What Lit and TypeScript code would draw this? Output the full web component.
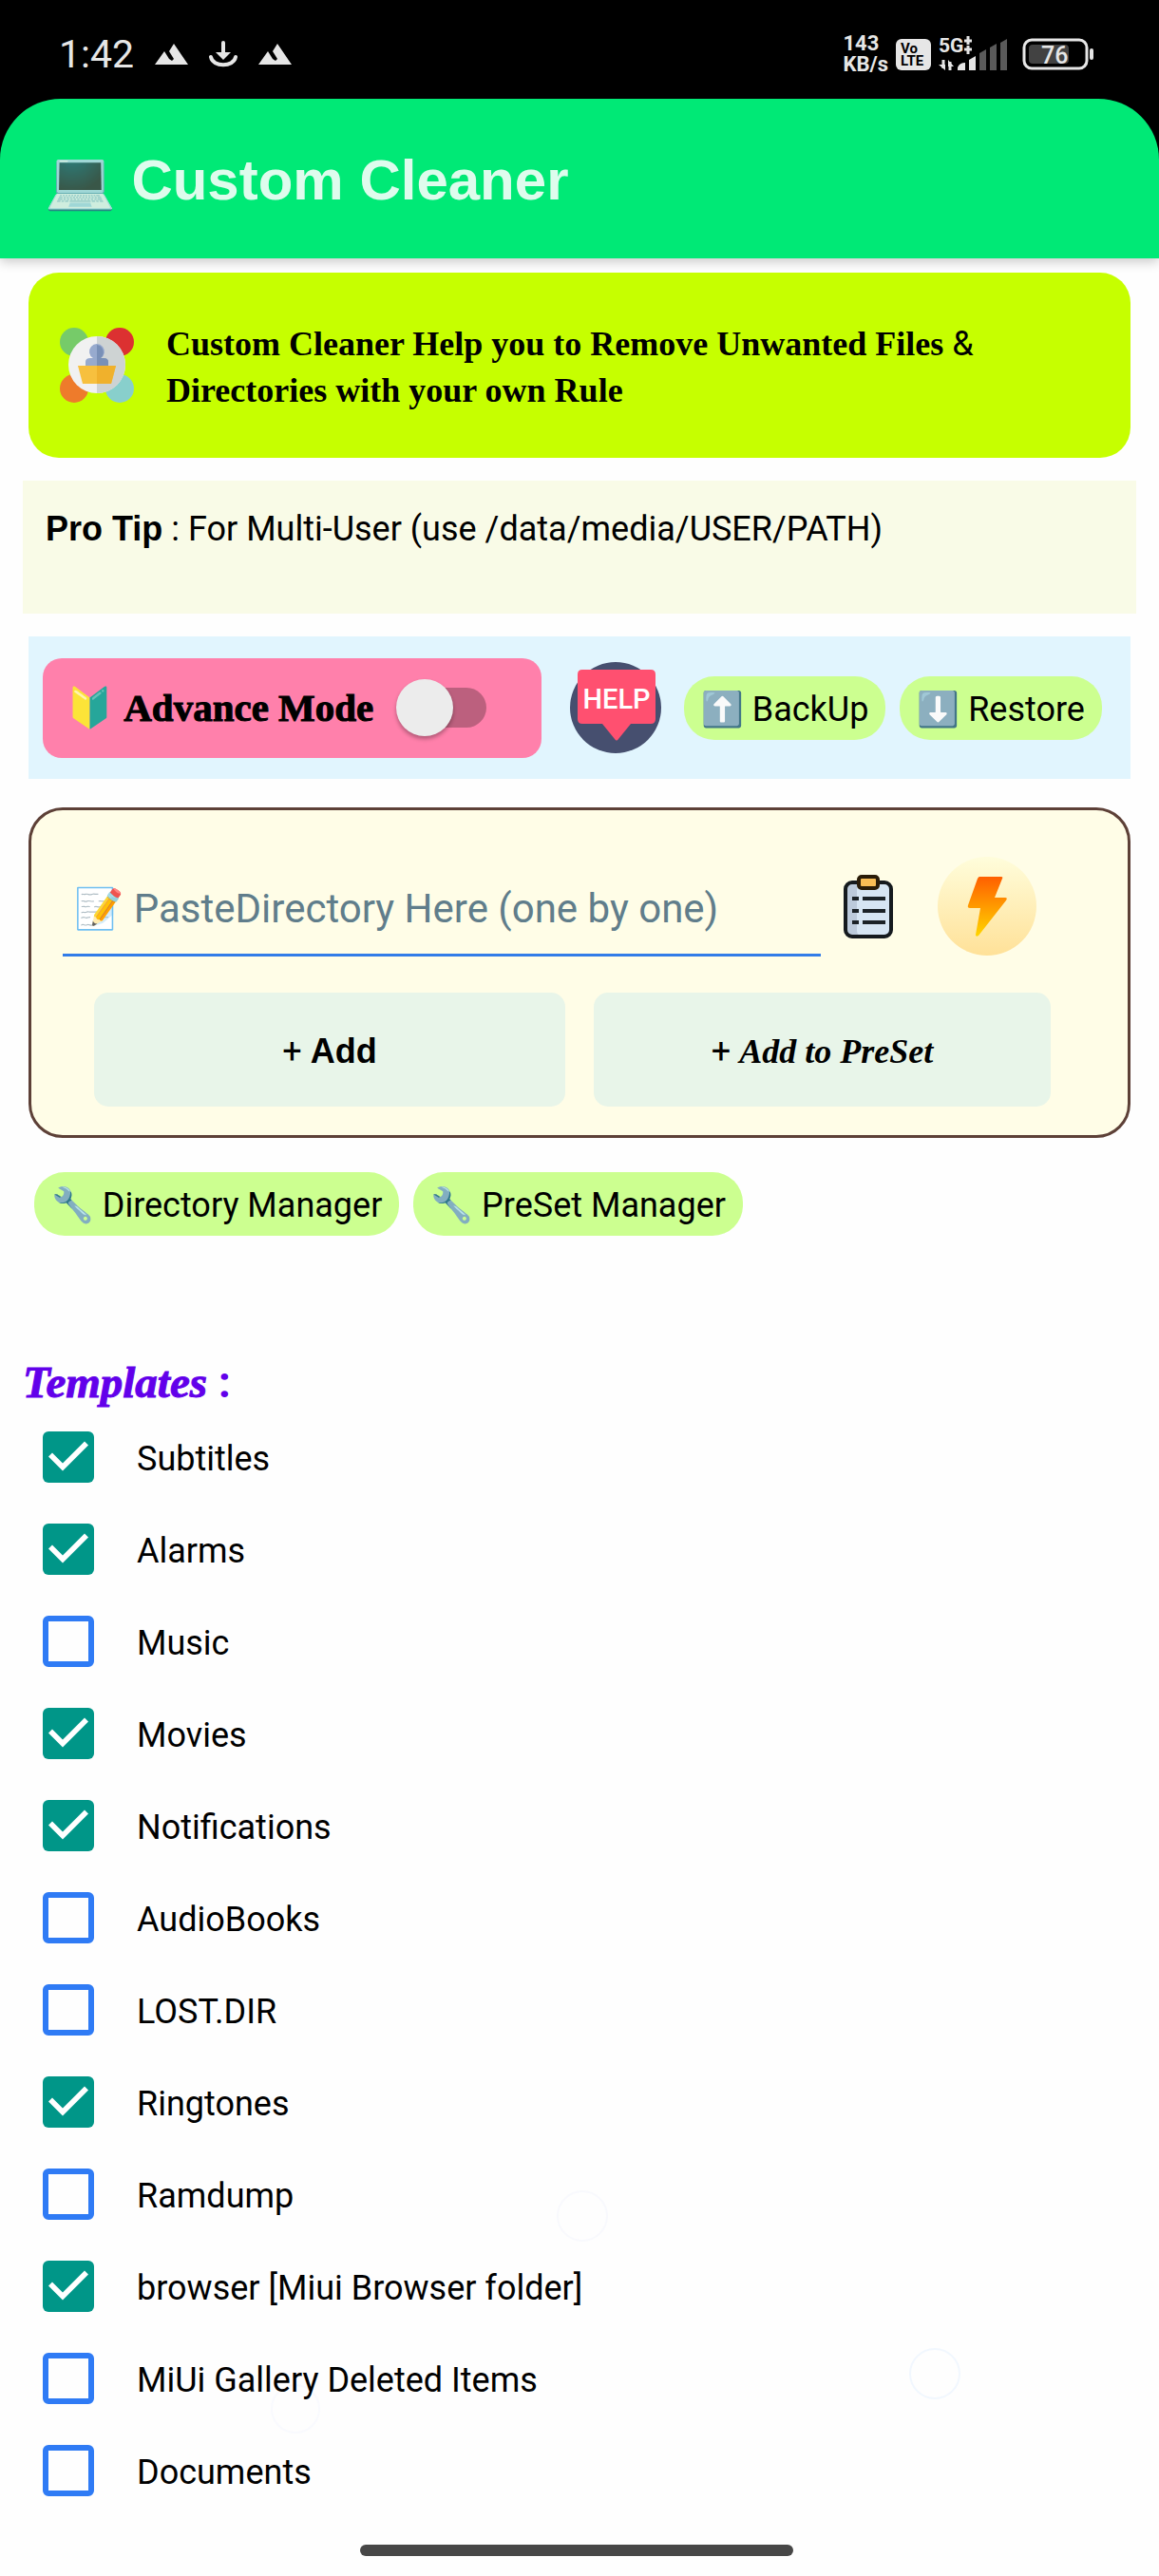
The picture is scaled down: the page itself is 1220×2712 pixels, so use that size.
import { LitElement, html, css, svg } from "lit";
import { customElement, property, state } from "lit/decorators.js";

interface Template {
  name: string;
  checked: boolean;
}

const mountain = html`<svg class="mountain" viewBox="0 0 35 22" aria-hidden="true">
  <path d="M0 22 10 8l5 8 3 2 2-2-5-8L20 0l15 22z" />
</svg>`;

@customElement("status-bar")
export class StatusBar extends LitElement {
  static styles = css`
    :host {
      display: flex;
      align-items: center;
      justify-content: space-between;
      height: 104px;
      padding: 10px 68px 0 62px;
      box-sizing: border-box;
      background: #000;
      color: #e6e6e6;
      font-family: Roboto, "Noto Sans", sans-serif;
    }
    .group {
      display: flex;
      align-items: center;
    }
    .left {
      gap: 22px;
    }
    .right {
      gap: 8px;
    }
    svg {
      display: block;
      fill: currentColor;
    }
    .time {
      font-size: 41px;
      line-height: 48px;
    }
    .mountain {
      width: 35px;
      height: 22px;
    }
    .download {
      width: 30px;
      height: 28px;
    }
    .speed {
      font-size: 22px;
      line-height: 22px;
      font-weight: 700;
    }
    .volte {
      width: 37px;
      height: 33px;
      border-radius: 6px;
      background: #e6e6e6;
      color: #000;
      font-size: 15px;
      line-height: 13px;
      padding: 4px 0 0 5px;
      box-sizing: border-box;
      font-weight: 700;
    }
    .signal {
      width: 73px;
      height: 48px;
      font-size: 21px;
      font-weight: 700;
    }
    .battery {
      width: 76px;
      height: 34px;
      font-size: 25px;
      font-weight: 500;
      margin-left: 7px;
    }
  `;

  render() {
    return html`
      <div class="group left">
        <span class="time">1:42</span>
        ${mountain}
        <svg class="download" viewBox="0 0 30 28" aria-hidden="true">
          <path d="M15 2v14M2 17c2 11 24 11 26 0" fill="none" stroke="currentColor" stroke-width="4" stroke-linecap="round" />
          <path d="M7 12h16l-8 8z" />
        </svg>
        ${mountain}
      </div>
      <div class="group right">
        <div class="speed">143<br />KB/s</div>
        <div class="volte">Vo<br />LTE</div>
        <svg class="signal" viewBox="0 -7 73 48" aria-label="5G signal">
          <text x="0" y="15">5G</text>
          <path d="M31 -2v9M27 3h8M31 8v9M27 12h8" stroke="currentColor" stroke-width="3" />
          <path d="M5 23v9M12 25v9" stroke="currentColor" stroke-width="3" />
          <path d="M0 28h7v6zM10 30v-7l6 7z" />
          <path d="M20 34v-3q2-5 8-5v8zM32 34V23l7-4v15z" />
          <path d="M43 34V16l7-4v22zM54 34V10l7-4v28zM65 34V5l7-4v33z" fill="#5a5a5a" />
        </svg>
        <svg class="battery" viewBox="0 0 76 34" aria-label="Battery">
          <rect x="2" y="2" width="66" height="30" rx="8" fill="none" stroke="currentColor" stroke-width="3" />
          <rect x="7" y="7" width="42" height="20" rx="4" fill="#424242" />
          <rect x="71" y="11" width="4" height="12" rx="2" />
          <text x="20" y="27">76</text>
        </svg>
      </div>
    `;
  }
}

@customElement("template-row")
export class TemplateRow extends LitElement {
  @property() name = "";
  @property({ type: Boolean }) checked = false;

  static styles = css`
    .row {
      display: flex;
      align-items: center;
      gap: 45px;
      height: 97px;
      padding-left: 45px;
      font-size: 36px;
      line-height: 42px;
    }
    .label {
      padding-top: 4px;
    }
    .box {
      appearance: none;
      flex: none;
      width: 54px;
      height: 54px;
      margin: 0;
      box-sizing: border-box;
      border: 6px solid #2f7bf5;
      border-radius: 6px;
    }
    .box:checked {
      border: 0;
      background: #009688;
    }
    .box:checked::before {
      content: "";
      display: block;
      width: 54px;
      height: 54px;
      background: #fff;
      clip-path: polygon(10px 23px, 6px 27px, 21px 42px, 48px 15px, 44px 11px, 21px 34px);
    }
  `;

  render() {
    return html`<label class="row">
      <input class="box" type="checkbox" .checked=${this.checked} />
      <span class="label">${this.name}</span>
    </label>`;
  }
}

@customElement("app-root")
export class AppRoot extends LitElement {
  @state() private templates: Template[] = [
    { name: "Subtitles", checked: true },
    { name: "Alarms", checked: true },
    { name: "Music", checked: false },
    { name: "Movies", checked: true },
    { name: "Notifications", checked: true },
    { name: "AudioBooks", checked: false },
    { name: "LOST.DIR", checked: false },
    { name: "Ringtones", checked: true },
    { name: "Ramdump", checked: false },
    { name: "browser [Miui Browser folder]", checked: true },
    { name: "MiUi Gallery Deleted Items", checked: false },
    { name: "Documents", checked: false },
  ];

  static styles = css`
    :host {
      display: block;
      position: relative;
      isolation: isolate;
      background: #fefefe;
      color: #000;
      font-family: Roboto, "Noto Sans", "Noto Color Emoji", sans-serif;
      font-size: 36px;
      line-height: 42px;
    }
    button {
      font: inherit;
      color: inherit;
      border: 0;
      margin: 0;
      padding: 0;
      background: none;
    }
    svg {
      display: block;
    }
    .top {
      background: #000;
    }
    .appbar {
      display: flex;
      align-items: center;
      height: 168px;
      padding: 0 47px;
      background: #00e976;
      border-radius: 64px 64px 0 0;
      box-shadow: 0 4px 12px rgba(0, 0, 0, 0.2);
    }
    .title {
      margin: 0;
      font: 700 60px/72px "Liberation Sans", Arial, "Noto Color Emoji", sans-serif;
      color: #fff;
      opacity: 0.87;
      padding-top: 3px;
    }
    .serif {
      font-family: "Liberation Serif", "Times New Roman", serif;
      font-weight: 700;
    }
    .sans {
      font-family: "Liberation Sans", Arial, sans-serif;
      font-weight: 700;
    }
    .intro {
      display: flex;
      align-items: center;
      gap: 34px;
      margin: 15px 30px 0;
      min-height: 195px;
      padding: 0 33px;
      box-sizing: border-box;
      background: #c6ff00;
      border-radius: 32px;
    }
    .logo {
      flex: none;
      width: 78px;
      height: 79px;
    }
    .introtext {
      margin: 0;
      padding-top: 4px;
      line-height: 49px;
      max-width: 900px;
    }
    .tip {
      margin: 24px 24px 0;
      min-height: 140px;
      padding: 30px 24px;
      box-sizing: border-box;
      background: #f9fbe7;
    }
    .tools {
      display: flex;
      align-items: center;
      gap: 15px;
      margin: 24px 30px 0;
      min-height: 150px;
      padding: 0 15px;
      box-sizing: border-box;
      background: #e1f5fe;
    }
    .mode {
      display: flex;
      align-items: center;
      justify-content: space-between;
      flex: 0 1 525px;
      height: 105px;
      padding: 0 58px 0 24px;
      box-sizing: border-box;
      border-radius: 20px;
      background: #ff80ab;
      font-size: 41px;
      line-height: 48px;
      white-space: nowrap;
    }
    .heavy {
      -webkit-text-stroke: 1px currentColor;
    }
    .switch {
      appearance: none;
      position: relative;
      flex: none;
      width: 95px;
      height: 60px;
      margin: 0;
    }
    .switch::before {
      content: "";
      position: absolute;
      inset: 9px 0 9px 12px;
      border-radius: 21px;
      background: #bc607e;
    }
    .switch::after {
      content: "";
      position: absolute;
      left: 0;
      top: 0;
      width: 60px;
      height: 60px;
      border-radius: 50%;
      background: #ececec;
      box-shadow: 0 3px 4px rgba(0, 0, 0, 0.3);
    }
    .help {
      flex: none;
      margin: 0 9px 0 15px;
    }
    .help svg {
      width: 96px;
      height: 96px;
    }
    .helptext {
      font: 500 29px Roboto, sans-serif;
    }
    .chip {
      height: 67px;
      padding: 3px 18px 0;
      border-radius: 32px;
      background: #ccff90;
      white-space: nowrap;
    }
    .entry {
      margin: 30px 30px 0;
      padding: 49px 0 30px;
      border: 3px solid #5d4037;
      border-radius: 36px;
      background: #fffde7;
    }
    .fieldrow {
      display: flex;
      align-items: flex-end;
      padding: 0 95px 0 33px;
    }
    .path {
      flex: 1;
      min-width: 0;
      height: 98px;
      padding: 0 12px;
      box-sizing: border-box;
      border: 0;
      border-bottom: 3px solid #327ce8;
      outline: 0;
      background: none;
      font: 42px/50px Roboto, "Noto Sans", "Noto Color Emoji", sans-serif;
    }
    .path::placeholder {
      color: #607d8b;
      opacity: 1;
    }
    .paste {
      align-self: center;
      margin: 0 47px 0 24px;
    }
    .paste svg {
      width: 52px;
      height: 67px;
    }
    .bolt svg {
      width: 105px;
      height: 105px;
    }
    .actions {
      display: grid;
      grid-template-columns: 33fr 32fr;
      gap: 30px;
      margin: 38px 81px 0 66px;
    }
    .action {
      height: 120px;
      padding-top: 4px;
      border-radius: 15px;
      background: #e8f5e9;
    }
    .managers {
      display: flex;
      gap: 15px;
      margin: 36px 36px 0;
    }
    .heading {
      margin: 124px 24px 0;
      font-size: 47px;
      line-height: 60px;
      color: #6200ea;
    }
    .slanted {
      font-style: italic;
    }
    .homebar {
      width: 456px;
      height: 12px;
      margin: 30px auto 0;
      border-radius: 6px;
      background: #474747;
    }
    .foot {
      padding: 0 6px 21px 0;
    }
    .bubbles {
      position: absolute;
      z-index: -1;
      left: 285px;
      bottom: 149px;
      width: 728px;
      height: 258px;
      pointer-events: none;
    }
  `;

  private logo = svg`<svg class="logo" viewBox="0 0 78 79" aria-hidden="true">
    <circle cx="15" cy="15" r="15" fill="#76cb69" />
    <circle cx="63" cy="15" r="15" fill="#dc3131" />
    <circle cx="15" cy="64" r="15" fill="#ee7b2b" />
    <circle cx="63" cy="64" r="15" fill="#88cfcc" />
    <circle cx="39" cy="39" r="30" fill="#f1f1f1" />
    <path d="M39 9a30 30 0 0 1 0 60z" fill="#ced3d3" />
    <path d="M27 41v-5q0-4 5-4h3a8 8 0 1 1 8 0h3q5 0 5 4v5z" fill="#97aace" />
    <path d="M39 18a8 8 0 0 1 4 14h3q5 0 5 4v5H39z" fill="#7990b7" />
    <path d="M19 40h40l-5 19H24z" fill="#f7c03e" />
    <path d="M39 40h20l-5 19H39z" fill="#f0b12c" />
  </svg>`;

  render() {
    return html`
      <status-bar></status-bar>
      <div class="top">
        <header class="appbar"><h1 class="title">💻 Custom Cleaner</h1></header>
      </div>
      <main>
        <section class="intro">
          ${this.logo}
          <p class="introtext">
            <span class="serif">Custom Cleaner Help you to Remove Unwanted Files</span> &amp;
            <span class="serif">Directories with your own Rule</span>
          </p>
        </section>
        <section class="tip"><span class="sans">Pro Tip</span> : For Multi-User (use /data/media/USER/PATH)</section>
        <section class="tools">
          <label class="mode">
            <span>🔰 <span class="serif heavy">Advance Mode</span></span>
            <input class="switch" type="checkbox" role="switch" />
          </label>
          <button class="help" aria-label="Help">
            <svg viewBox="0 0 96 96">
              <circle cx="48" cy="48" r="48" fill="#464f6f" />
              <path d="M13 8h72q5 0 5 5v47q0 5-5 5H64L51 81q-2 3-4 0L34 65H13q-5 0-5-5V13q0-5 5-5z" fill="#ff5070" />
              <text class="helptext" x="49" y="49" text-anchor="middle" fill="#fff">HELP</text>
            </svg>
          </button>
          <button class="chip">⬆️ BackUp</button>
          <button class="chip">⬇️ Restore</button>
        </section>
        <section class="entry">
          <div class="fieldrow">
            <input class="path" type="text" aria-label="Directory path" placeholder="📝 PasteDirectory Here (one by one)" />
            <button class="paste" aria-label="Paste">
              <svg viewBox="0 0 52 67">
                <rect x="2" y="8" width="48" height="57" rx="7" fill="#d6e5f3" />
                <path d="M9 9h5v50q0 4 4 5H9q-6 0-6-6V15q0-6 6-6z" fill="#bccadb" />
                <rect x="2" y="8" width="48" height="57" rx="7" fill="none" stroke="#151a1e" stroke-width="4" />
                <rect x="16" y="2" width="20" height="12" rx="3" fill="#f9bd55" stroke="#2a1c08" stroke-width="4" />
                <path d="M9 25h7M20 25h24M9 38h7M20 38h24M9 50h7M20 50h24" stroke="#1b2227" stroke-width="4" />
              </svg>
            </button>
            <button class="bolt" aria-label="Quick add">
              <svg viewBox="0 0 105 105">
                <defs>
                  <linearGradient id="disc" x1="0" y1="0" x2="0" y2="1">
                    <stop offset="0" stop-color="#fffddb" />
                    <stop offset="1" stop-color="#ffe198" />
                  </linearGradient>
                  <linearGradient id="spark" x1="0" y1="0" x2="0" y2="1">
                    <stop offset="0" stop-color="#ff5f00" />
                    <stop offset="1" stop-color="#ffd500" />
                  </linearGradient>
                </defs>
                <circle cx="52" cy="52" r="52" fill="url(#disc)" />
                <path d="M44 21h23q2 0 1 2l-8 20h11q3 0 1 3L43 83q-3 2-3-1l5-28H34q-3 0-2-3l10-28q1-2 2-2z" fill="url(#spark)" />
              </svg>
            </button>
          </div>
          <div class="actions">
            <button class="action">+ <span class="sans">Add</span></button>
            <button class="action">+ <span class="serif slanted">Add to PreSet</span></button>
          </div>
        </section>
        <nav class="managers">
          <button class="chip">🔧 Directory Manager</button>
          <button class="chip">🔧 PreSet Manager</button>
        </nav>
        <h2 class="heading"><span class="serif slanted heavy">Templates</span> :</h2>
        <div>
          ${this.templates.map((t) => html`<template-row .name=${t.name} .checked=${t.checked}></template-row>`)}
        </div>
      </main>
      <div class="foot"><div class="homebar"></div></div>
      <svg class="bubbles" viewBox="0 0 728 258" fill="none" stroke-width="2" aria-hidden="true">
        <circle cx="328" cy="28" r="26" stroke="#f8f9fd" />
        <circle cx="699" cy="194" r="26" stroke="#f1f7fe" />
        <circle cx="26" cy="231" r="25" stroke="#f9fafe" />
      </svg>
    `;
  }
}
